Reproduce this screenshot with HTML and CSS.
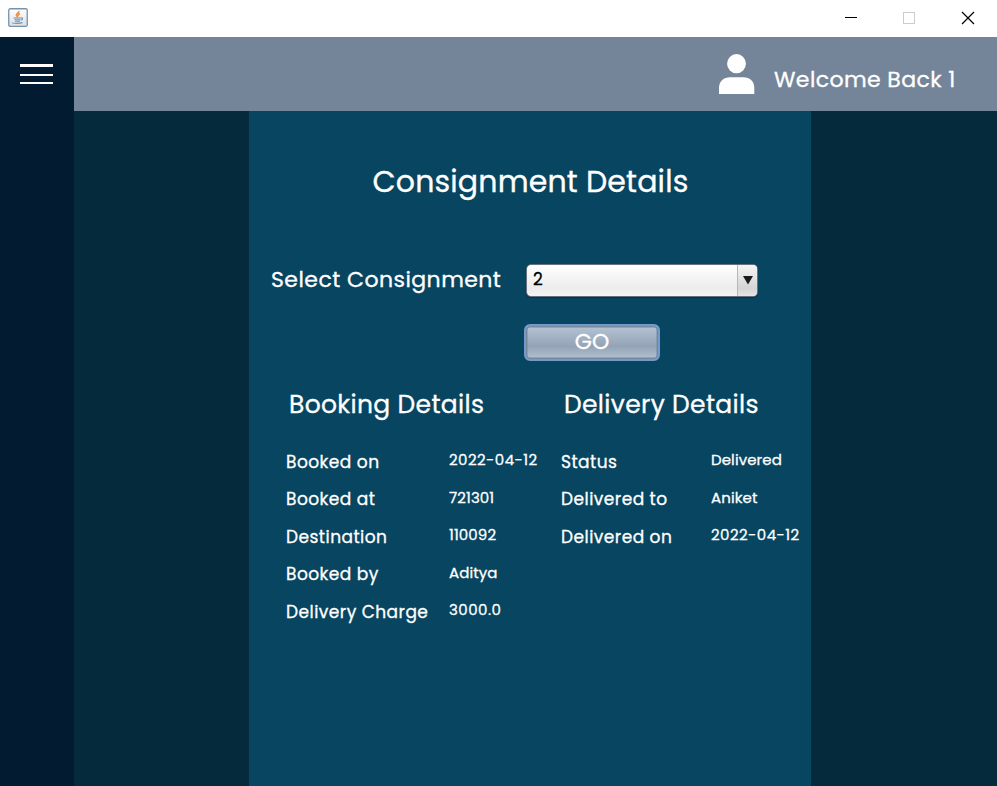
FILE: index.html
```html
<!DOCTYPE html>
<html lang="en">
<head>
<meta charset="utf-8">
<title>Consignment Details</title>
<link rel="stylesheet" href="styles.css">
</head>
<body>
<header class="titlebar">
  <svg class="java" width="20" height="20" viewBox="0 0 20 20">
    <defs><linearGradient id="jb" x1="0" y1="0" x2="0" y2="1"><stop offset="0" stop-color="#fff"/><stop offset="1" stop-color="#dcdfe2"/></linearGradient></defs>
    <rect x=".75" y=".75" width="18.5" height="17.7" rx="1.5" fill="url(#jb)" stroke="#7593ab" stroke-width="1.3"/>
    <path d="M10.8 3c.5 2-3 2.900-2.300 4.500.3.800 1.200 1 1.200 1.900M12 5.500c-1.800.8-2.200 1.800-1.500 2.600" fill="none" stroke="#f0944d" stroke-width="1.800"/>
    <path d="M5.500 10h7.500M6.500 11.700h6M7 13.300h5M13 10c2.200-.6 2 1.900-.1 2.200M4.300 14.500c0 1.200 8.500 1.200 10.200 0" fill="none" stroke="#6f93b4" stroke-width="1.100"/>
  </svg>
  <div class="controls">
    <svg width="12" height="12" shape-rendering="crispEdges"><path d="M0 5h12v1H0z"/></svg>
    <svg width="12" height="12" shape-rendering="crispEdges"><rect x=".5" y=".5" width="11" height="11" fill="none" stroke="#ccc"/></svg>
    <svg width="12" height="12"><path d="M0 0l12 12M12 0L0 12" fill="none" stroke="#000" stroke-width="1.200"/></svg>
  </div>
</header>
<div class="app">
  <nav class="sidebar">
    <div class="burger"><i class="thick"></i><i></i><i></i></div>
  </nav>
  <div class="main">
    <div class="topbar">
      <svg class="avatar" width="36" height="41" viewBox="0 0 36 41"><ellipse cx="17.500" cy="9.700" rx="9.400" ry="9.600" fill="#fff"/><path d="M0 40V34C0 27 5 23.300 11 23.300H24.500C30.500 23.300 35.300 27 35.300 34V40Z" fill="#fff"/></svg>
      <span class="welcome">Welcome Back 1</span>
    </div>
    <main class="panel">
      <h1>Consignment Details</h1>
      <div class="select-row">
        <label class="select-label">Select Consignment</label>
        <div class="combo"><span class="combo-value">2</span><span class="combo-arrow"><svg width="10" height="9"><path d="M0 0h10L5 8.500z" fill="#1b1b1b"/></svg></span></div>
      </div>
      <button class="go">GO</button>
      <div class="details">
        <section class="booking">
          <h2>Booking Details</h2>
          <dl>
            <dt>Booked on</dt><dd class="date">2022-04-12</dd>
            <dt>Booked at</dt><dd>721301</dd>
            <dt>Destination</dt><dd>110092</dd>
            <dt>Booked by</dt><dd>Aditya</dd>
            <dt>Delivery Charge</dt><dd class="date">3000.0</dd>
          </dl>
        </section>
        <section class="delivery">
          <h2>Delivery Details</h2>
          <dl>
            <dt>Status</dt><dd>Delivered</dd>
            <dt>Delivered to</dt><dd>Aniket</dd>
            <dt>Delivered on</dt><dd class="date">2022-04-12</dd>
          </dl>
        </section>
      </div>
    </main>
  </div>
</div>
</body>
</html>
```
FILE: styles.css
```css
* { box-sizing: border-box; }
body {
  margin: 0;
  height: 786px;
  display: flex;
  flex-direction: column;
  overflow: hidden;
  font-family: Poppins, Inter, "Open Sans", sans-serif;
  -webkit-text-stroke: .3px currentColor;
  color: #fff;
  white-space: nowrap;
}
.titlebar {
  height: 37px;
  flex: none;
  display: flex;
  justify-content: space-between;
  align-items: flex-start;
  padding: 8px 23px 0 8px;
  background: #fff;
}
.controls { display: flex; gap: 46px; padding-top: 4px; }
.controls svg { display: block; overflow: visible; }
.controls svg:last-child { margin-left: 1px; }
.app { flex: 1; display: flex; }
.sidebar { width: 74px; background: #031b30; padding: 27px 0 0 20px; }
.burger { width: 33px; height: 20px; display: flex; flex-direction: column; justify-content: space-between; }
.burger i { height: 2px; background: #fff; }
.burger .thick { height: 3px; }
.main { flex: 1; display: flex; flex-direction: column; background: #042a3b; }
.topbar {
  height: 74px;
  display: flex;
  align-items: flex-start;
  padding: 17px 0 0 645px;
  background: #748599;
}
.avatar { flex: none; margin-right: 19px; }
.welcome { font-size: 22px; line-height: 30px; margin-top: 11px; letter-spacing: .4px; }
.panel { flex: 1; width: 562px; margin-left: 175px; background: #074561; }
h1, h2, dl, dd { margin: 0; font-weight: 400; }
h1 { padding: 51px 0 0 1px; font-size: 30px; line-height: 40px; text-align: center; letter-spacing: .15px; }
.select-row { display: flex; align-items: center; margin: 61px 0 0 22px; height: 34px; }
.select-label { width: 255px; font-size: 22px; line-height: 32px; letter-spacing: .45px; }
.combo {
  width: 232px;
  height: 33px;
  display: flex;
  border: 1px solid #66727d;
  border-radius: 5px;
  background: linear-gradient(#fff, #ececec 75%, #f5f5f5);
  box-shadow: 0 1px 1px #03324a;
  overflow: hidden;
}
.combo-value { flex: 1; padding-left: 6px; font-size: 17px; line-height: 29px; color: #000; }
.combo-arrow { width: 20px; padding-left: 1px; display: flex; align-items: center; justify-content: center; border-left: 1px solid #b4b8bc; background: linear-gradient(#f6f6f6, #d4d4d4 75%, #e6e6e6); }
.go {
  display: block;
  width: 136px;
  height: 37px;
  margin: 27px 0 0 275px;
  padding: 0 0 1px;
  border: 2px solid #6f9ccb;
  border-radius: 6px;
  background: linear-gradient(#b5c4d4, #94a3b5 62%, #b3c3d3);
  box-shadow: inset 0 0 0 1.500px #78879a;
  color: #fff;
  font: 400 22px/30px Poppins, Inter, sans-serif;
}
.details { display: flex; margin-top: 27px; }
.booking { width: 275px; padding-left: 37px; }
.delivery { padding-left: 37px; }
h2 { margin-left: 3px; font-size: 25px; line-height: 34px; letter-spacing: .33px; }
dl { display: grid; grid-template-columns: 163px 1fr; grid-auto-rows: 37.5px; padding-top: 23px; }
.delivery dl { grid-template-columns: 150px 1fr; }
dt { margin-top: -.2px; font-size: 17px; line-height: 35px; letter-spacing: .47px; }
dd { font-size: 15px; line-height: 30px; letter-spacing: .1px; }
.date { letter-spacing: .45px; }
```
